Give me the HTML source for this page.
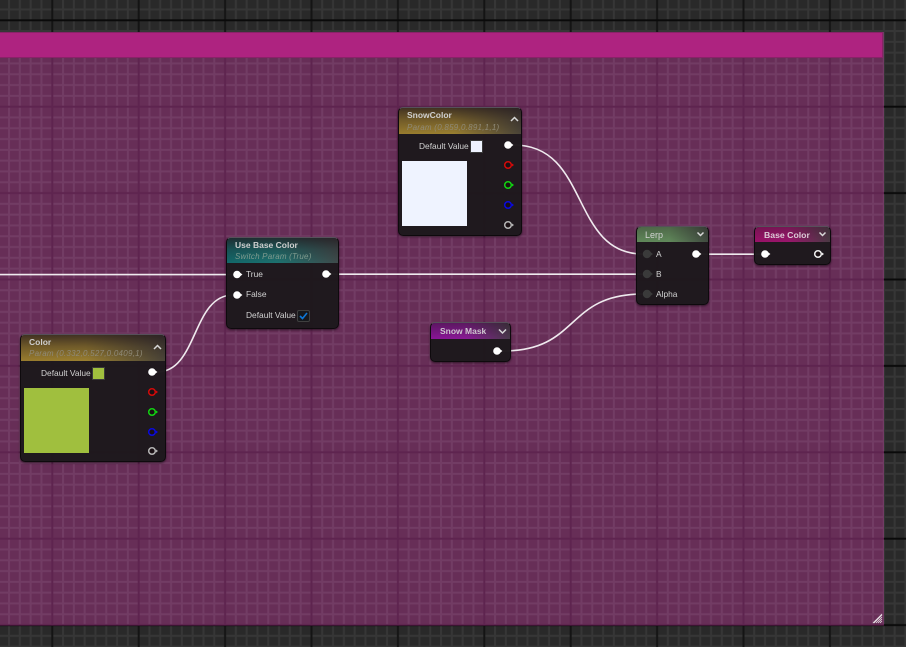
<!DOCTYPE html>
<html><head><meta charset="utf-8">
<style>
html,body{margin:0;padding:0;background:#282828;}
body{width:906px;height:647px;overflow:hidden;position:relative;font-family:"Liberation Sans",sans-serif;}
.abs{position:absolute;}
svg{position:absolute;left:0;top:0;}
.node{position:absolute;background:rgba(30,24,29,.98);border:1px solid #0e0a0d;border-top-color:#56505a;border-radius:5px;box-shadow:0 1px 2px rgba(0,0,0,.55);overflow:hidden;box-sizing:border-box;}
.hd{position:absolute;left:0;right:0;top:0;border-radius:4px 4px 0 0;}
.t{position:absolute;font-size:8.4px;line-height:11px;white-space:nowrap;color:#d2d2d2;}
.b{font-weight:bold;font-size:8.5px;color:#cfcfcf;}
.s{font-style:italic;font-size:8px;color:#8f8a78;letter-spacing:.25px;}
</style></head><body>
<svg width="906" height="647" viewBox="0 0 906 647">
<defs>
<pattern id="dk" patternUnits="userSpaceOnUse" x="51" y="19" width="86.4" height="86.4">
<rect width="86.4" height="86.4" fill="#292929"/>
<g fill="#363636">
<rect x="11.05" width="2" height="86.4"/><rect x="21.85" width="2" height="86.4"/><rect x="32.65" width="2" height="86.4"/><rect x="43.45" width="2" height="86.4"/><rect x="54.25" width="2" height="86.4"/><rect x="65.05" width="2" height="86.4"/><rect x="75.85" width="2" height="86.4"/>
<rect y="11.05" width="86.4" height="2"/><rect y="21.85" width="86.4" height="2"/><rect y="32.65" width="86.4" height="2"/><rect y="43.45" width="86.4" height="2"/><rect y="54.25" width="86.4" height="2"/><rect y="65.05" width="86.4" height="2"/><rect y="75.85" width="86.4" height="2"/>
</g>
<rect x="0.300" width="2" height="86.4" fill="#141414"/><rect y="0.300" width="86.4" height="2" fill="#0a0a0a"/>
</pattern>
<pattern id="pk" patternUnits="userSpaceOnUse" x="51" y="19" width="86.4" height="86.4">
<rect width="86.4" height="86.4" fill="#672e57"/>
<g fill="#723c64">
<rect x="11.05" width="2" height="86.4"/><rect x="21.85" width="2" height="86.4"/><rect x="32.65" width="2" height="86.4"/><rect x="43.45" width="2" height="86.4"/><rect x="54.25" width="2" height="86.4"/><rect x="65.05" width="2" height="86.4"/><rect x="75.85" width="2" height="86.4"/>
<rect y="11.05" width="86.4" height="2"/><rect y="21.85" width="86.4" height="2"/><rect y="32.65" width="86.4" height="2"/><rect y="43.45" width="86.4" height="2"/><rect y="54.25" width="86.4" height="2"/><rect y="65.05" width="86.4" height="2"/><rect y="75.85" width="86.4" height="2"/>
</g>
<rect x="0.300" width="2" height="86.4" fill="#5e244f"/><rect y="0.300" width="86.4" height="2" fill="#5e244f"/>
</pattern>
</defs>
<rect width="906" height="647" fill="url(#dk)"/>
<rect x="0" y="32" width="884" height="593" fill="url(#pk)"/>
<rect x="0" y="625" width="884" height="1" fill="#3a1431"/>
<rect x="0" y="32" width="883" height="26" fill="#8a2268"/>
<rect x="0" y="33" width="882" height="24" fill="#ae2380"/>
<path d="M874 623L882 615M876 623L882 617M878 623L882 619M880 623L882 621M873 623L882 614" stroke="#e6dfe4" stroke-width=".8" fill="none"/>
<g fill="none" stroke="#efeaee" stroke-width="1.6">
<path d="M0 274.600H233"/>
<path d="M330 274.200H643"/>
<path d="M157 372C198 372 192 295 233 295"/>
<path d="M514 145C590 145 570 254 643 254"/>
<path d="M503 351C580 351 565 294 643 294"/>
<path d="M702 254.200H761"/>
</g>
</svg>

<!-- Use Base Color -->
<div class="node" style="left:226px;top:237px;width:113px;height:92px">
<div class="hd" style="height:25px;background:linear-gradient(90deg,#12686a 0%,#1d7270 45%,#3f4b4b 100%);"><div style="position:absolute;inset:0;background:linear-gradient(180deg,rgba(35,25,30,.75) 0%,rgba(35,25,30,.3) 45%,rgba(0,0,0,0) 100%)"></div></div>
</div>
<div class="t b" style="left:235px;top:240px">Use Base Color</div>
<div class="t s" style="left:235px;top:251px;color:#7f9a8e;letter-spacing:.2px">Switch Param (True)</div>
<div class="t" style="left:246px;top:269px">True</div>
<div class="t" style="left:246px;top:289px">False</div>
<div class="t" style="left:246px;top:310px">Default Value</div>
<div class="abs" style="left:297px;top:310px;width:11px;height:10px;border:1px solid #3f3f3f;background:#16181c;border-radius:2px"></div>

<!-- Color -->
<div class="node" style="left:20px;top:334px;width:146px;height:128px">
<div class="hd" style="height:26px;background:linear-gradient(90deg,#997c2e 0%,#9a7f30 45%,#4a4438 100%);"><div style="position:absolute;inset:0;background:linear-gradient(180deg,rgba(35,25,30,.75) 0%,rgba(35,25,30,.35) 45%,rgba(0,0,0,0) 100%)"></div></div>
</div>
<div class="t b" style="left:29px;top:337px">Color</div>
<div class="t s" style="left:29px;top:348px">Param (0.332,0.527,0.0409,1)</div>
<div class="t" style="left:41px;top:368px">Default Value</div>
<div class="abs" style="left:92px;top:367px;width:11px;height:11px;border:1px solid #3a3a3a;background:#a0bf3e"></div>
<div class="abs" style="left:24px;top:388px;width:65px;height:65px;background:#a0bf3e"></div>

<!-- SnowColor -->
<div class="node" style="left:398px;top:107px;width:124px;height:129px">
<div class="hd" style="height:26px;background:linear-gradient(90deg,#997c2e 0%,#9a7f30 45%,#4a4438 100%);"><div style="position:absolute;inset:0;background:linear-gradient(180deg,rgba(35,25,30,.75) 0%,rgba(35,25,30,.35) 45%,rgba(0,0,0,0) 100%)"></div></div>
</div>
<div class="t b" style="left:407px;top:110px">SnowColor</div>
<div class="t s" style="left:407px;top:122px">Param (0.859,0.891,1,1)</div>
<div class="t" style="left:419px;top:141px">Default Value</div>
<div class="abs" style="left:470px;top:140px;width:11px;height:11px;border:1px solid #3a3a3a;background:#eff3ff"></div>
<div class="abs" style="left:402px;top:161px;width:65px;height:65px;background:#eff3ff"></div>

<!-- Snow Mask -->
<div class="node" style="left:430px;top:322px;width:81px;height:40px">
<div class="hd" style="height:16px;background:linear-gradient(90deg,#8a1498 0%,#8a1a96 45%,#4a3a4c 100%);"><div style="position:absolute;inset:0;background:linear-gradient(180deg,rgba(35,25,30,.45) 0%,rgba(0,0,0,0) 100%)"></div></div>
</div>
<div class="t b" style="left:440px;top:326px;color:#cfc6d0">Snow Mask</div>

<!-- Lerp -->
<div class="node" style="left:636px;top:226px;width:73px;height:79px">
<div class="hd" style="height:15px;background:linear-gradient(90deg,#5f8759 0%,#618a5b 45%,#404a40 100%);"><div style="position:absolute;inset:0;background:linear-gradient(180deg,rgba(35,25,30,.3) 0%,rgba(0,0,0,0) 100%)"></div></div>
</div>
<div class="t" style="left:645px;top:229.500px;font-size:9px;color:#d3d3d3">Lerp</div>
<div class="t" style="left:656px;top:249px">A</div>
<div class="t" style="left:656px;top:269px">B</div>
<div class="t" style="left:656px;top:289px">Alpha</div>

<!-- Base Color -->
<div class="node" style="left:754px;top:226px;width:77px;height:39px">
<div class="hd" style="height:15px;background:linear-gradient(90deg,#9a1168 0%,#9a166c 45%,#4a3a44 100%);"><div style="position:absolute;inset:0;background:linear-gradient(180deg,rgba(35,25,30,.3) 0%,rgba(0,0,0,0) 100%)"></div></div>
</div>
<div class="t b" style="left:764px;top:229.500px;color:#dccbd6;font-size:8.700px">Base Color</div>

<svg width="906" height="647" viewBox="0 0 906 647">
<defs>
<g id="fp"><circle cx="0" cy="0" r="3.8" fill="#fff"/><path d="M3.4 -1.6L5.4 0L3.4 1.6Z" fill="#fff"/></g>
<g id="hp"><circle cx="0" cy="0" r="3.300" fill="#1a1014" stroke="currentColor" stroke-width="1.500"/><path d="M4 -1.500L6 0L4 1.500Z" fill="currentColor"/></g>
<g id="gp"><circle cx="0" cy="0" r="4.2" fill="#3a3a3a"/><path d="M4 -1.5L6 0L4 1.5Z" fill="#3a3a3a"/></g>
</defs>
<g fill="none" stroke="#d8d8d8" stroke-width="1.500">
<path d="M511 121L514.500 117.500L518 121"/>
<path d="M154 349L157.500 345.500L161 349"/>
<path d="M499 329.500L502.500 333L506 329.500"/>
<path d="M697.500 232.500L700.500 235.500L703.500 232.500"/>
<path d="M819.500 232.500L822.500 235.500L825.500 232.500"/>
</g>
<path d="M300 316L302.500 318.500L307 313" fill="none" stroke="#0d76d6" stroke-width="1.600"/>
<use href="#fp" x="237" y="274.500"/><use href="#fp" x="237" y="295"/><use href="#fp" x="326" y="274"/>
<use href="#fp" x="152" y="372"/><use href="#fp" x="508" y="145"/><use href="#fp" x="497" y="351"/>
<use href="#fp" x="696" y="254"/><use href="#fp" x="765" y="254"/>
<use href="#hp" x="152" y="392" style="color:#d40a0a"/><use href="#hp" x="152" y="412" style="color:#12d412"/><use href="#hp" x="152" y="432" style="color:#0a0ae0"/><use href="#hp" x="152" y="451" style="color:#b5b5b5"/>
<use href="#hp" x="508" y="165" style="color:#d40a0a"/><use href="#hp" x="508" y="185" style="color:#12d412"/><use href="#hp" x="508" y="205" style="color:#0a0ae0"/><use href="#hp" x="508" y="225" style="color:#b5b5b5"/>
<use href="#hp" x="818" y="254" style="color:#efefef"/>
<use href="#gp" x="647" y="254"/><use href="#gp" x="647" y="274"/><use href="#gp" x="647" y="294"/>
</svg>
</body></html>
